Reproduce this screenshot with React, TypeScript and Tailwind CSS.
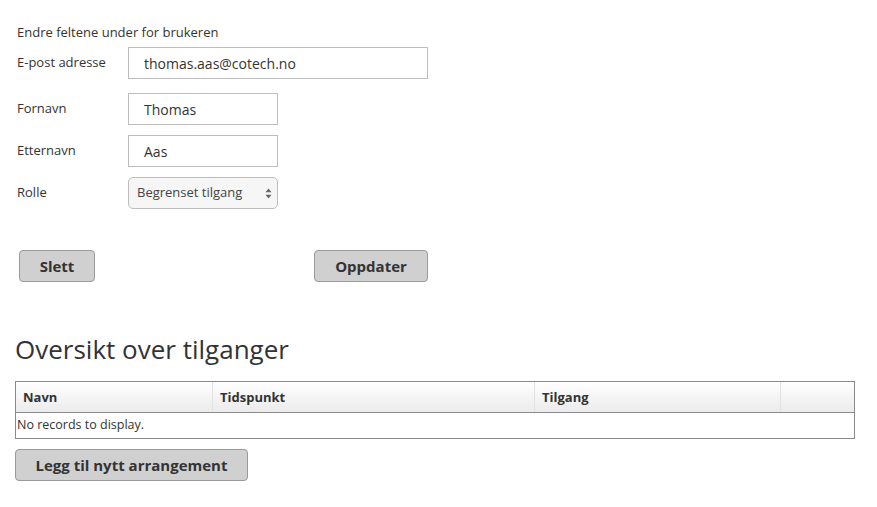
import React from 'react';

const font = { fontFamily: '"Open Sans", "Liberation Sans", sans-serif' };

function Field({ label, value, wide }: { label: string; value: string; wide?: boolean }) {
  return (
    <div className="flex items-center">
      <span className="w-[111px] text-[13px] text-[#333]">{label}</span>
      <div
        className={`h-[32px] border border-[#bdbdbd] bg-white flex items-center pl-[15px] text-[14px] text-[#333] ${
          wide ? 'w-[300px]' : 'w-[150px]'
        }`}
      >
        {value}
      </div>
    </div>
  );
}

function GrayButton({ children, className = '' }: { children: React.ReactNode; className?: string }) {
  return (
    <button
      className={`h-[32px] rounded-[4px] border border-[#9a9a9a] bg-[#d0d0d0] text-[15px] font-bold text-[#333] ${className}`}
    >
      {children}
    </button>
  );
}

export default function App() {
  return (
    <div className="w-[877px] h-[507px] bg-white text-[#333]" style={font}>
      <div className="pl-[17px] pt-[23px]">
        <p className="text-[13px] leading-[18px]">Endre feltene under for brukeren</p>
        <div className="mt-[6px] flex flex-col">
          <Field label="E-post adresse" value="thomas.aas@cotech.no" wide />
          <div className="mt-[14px]">
            <Field label="Fornavn" value="Thomas" />
          </div>
          <div className="mt-[10px]">
            <Field label="Etternavn" value="Aas" />
          </div>
          <div className="mt-[10px] flex items-center">
            <span className="w-[111px] text-[13px]">Rolle</span>
            <div className="w-[150px] h-[32px] rounded-[5px] border border-[#bdbdbd] bg-[#f6f6f6] flex items-center justify-between pl-[8px] pr-[5px] text-[13px] text-[#444]">
              <span>Begrenset tilgang</span>
              <svg width="7" height="11" viewBox="0 0 7 11">
                <path d="M3.5 0.5 L6.5 4.3 L0.5 4.3 Z" fill="#666" />
                <path d="M3.5 10.5 L6.5 6.7 L0.5 6.7 Z" fill="#666" />
              </svg>
            </div>
          </div>
        </div>
        <div className="mt-[41px] flex">
          <GrayButton className="ml-[2px] w-[76px]">Slett</GrayButton>
          <GrayButton className="ml-[219px] w-[114px]">Oppdater</GrayButton>
        </div>
      </div>

      <div className="pl-[15px] pr-[22px]">
        <h2 className="mt-[49px] text-[26px] leading-[36px] text-[#333]">Oversikt over tilganger</h2>
        <div className="mt-[14px] border border-[#8a8a8a]">
          <div className="grid grid-cols-[197px_322px_246px_1fr] h-[31px] border-b border-[#8a8a8a] bg-gradient-to-b from-white to-[#ebebeb] text-[13px] font-bold">
            <div className="flex items-center pl-[7px] pt-[2px] border-r border-[#e2e2e2]">Navn</div>
            <div className="flex items-center pl-[7px] pt-[2px] border-r border-[#e2e2e2]">Tidspunkt</div>
            <div className="flex items-center pl-[7px] pt-[2px] border-r border-[#e2e2e2]">Tilgang</div>
            <div />
          </div>
          <div className="h-[25px] flex items-center pl-[1px] text-[12.5px] text-[#333]">No records to display.</div>
        </div>
        <GrayButton className="mt-[10px] w-[233px]">Legg til nytt arrangement</GrayButton>
      </div>
    </div>
  );
}
